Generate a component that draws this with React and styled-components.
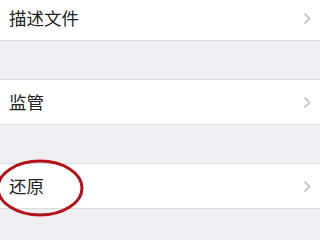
import styled, { createGlobalStyle } from 'styled-components';

const GlobalStyle = createGlobalStyle`
  html, body {
    margin: 0;
    padding: 0;
    background: #efeff4;
    overflow: hidden;
  }
  body {
    font-family: "Noto Sans CJK SC", "Noto Sans", sans-serif;
  }
`;

const Page = styled.div`
  width: 320px;
  height: 245px;
  margin-top: -5px;
  background: #efeff4;
  display: flex;
  flex-direction: column;
  gap: 38px;
`;

const Group = styled.div`
  background: #fff;
  border-top: 1px solid #dcdce0;
  border-bottom: 1px solid #dcdce0;
`;

const Row = styled.div`
  position: relative;
  height: 44px;
  display: flex;
  align-items: center;
  justify-content: space-between;
  padding: 0 9px 0 9px;
`;

const Label = styled.span`
  font-size: 17.5px;
  color: #222;
  line-height: 1;
`;

const Chevron = () => (
  <svg width="8" height="13" viewBox="0 0 8 13">
    <polyline points="1.5,1.5 6.5,6.5 1.5,11.5" fill="none" stroke="#c7c7cc" strokeWidth="1.8" />
  </svg>
);

const Circle = styled.svg`
  position: absolute;
  left: -4px;
  top: -5px;
  overflow: visible;
  pointer-events: none;
`;

const Mark = () => (
  <Circle width="90" height="58" viewBox="0 0 90 58">
    <ellipse cx="44" cy="29" rx="42" ry="27" fill="none" stroke="#b3121b" strokeWidth="3" />
  </Circle>
);

const items = [
  { label: '描述文件' },
  { label: '监管' },
  { label: '还原', marked: true },
];

export default function App() {
  return (
    <>
      <GlobalStyle />
      <Page>
        {items.map((it) => (
          <Group key={it.label}>
            <Row>
              <Label>{it.label}</Label>
              <Chevron />
              {it.marked && <Mark />}
            </Row>
          </Group>
        ))}
      </Page>
    </>
  );
}
